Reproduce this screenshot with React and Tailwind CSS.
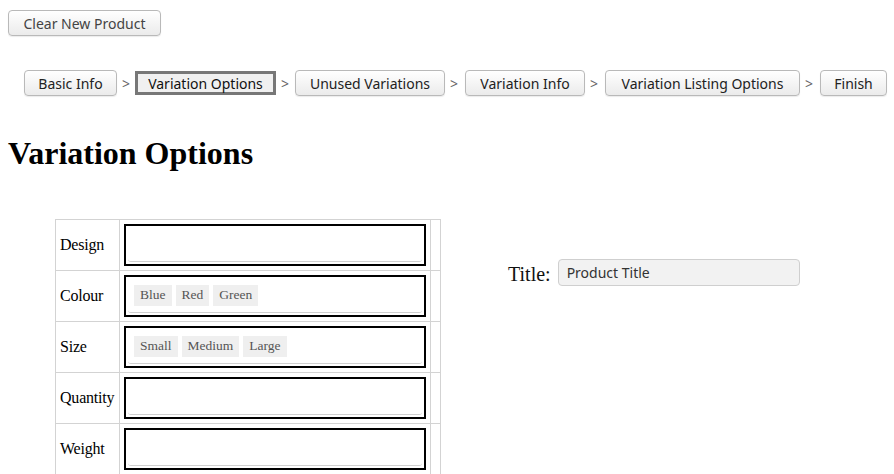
import React from "react";

// ============================================
// DATA
// ============================================
const STEPS = [
  { label: "Basic Info", w: "w-[93px]" },
  { label: "Variation Options", w: "w-[141px]", active: true },
  { label: "Unused Variations", w: "w-[150px]" },
  { label: "Variation Info", w: "w-[120px]" },
  { label: "Variation Listing Options", w: "w-[195px]" },
  { label: "Finish", w: "w-[67px]" },
];

const ROWS = [
  { name: "Design", tags: [] },
  { name: "Colour", tags: ["Blue", "Red", "Green"] },
  { name: "Size", tags: ["Small", "Medium", "Large"] },
  { name: "Quantity", tags: [] },
  { name: "Weight", tags: [] },
];

const uiFont = "font-['Noto_Sans',sans-serif]";
const serifFont = "font-['Liberation_Serif',serif]";

const btnBase = `h-[26px] rounded-[4px] border border-[#b9b9b9] bg-gradient-to-b from-white to-[#ebebeb] text-[14px] text-[#222] ${uiFont} flex items-center justify-center shadow-[0_1px_1px_rgba(0,0,0,0.08)]`;

const TagInput = ({ tags }) => (
  <div className="h-[42px] border-2 border-black bg-white p-[2px]">
    <div className="h-[34px] rounded-[3px] border-b border-[#d0d0d0] flex items-center gap-[4px] pl-[6px]">
      {tags.map((t) => (
        <span
          key={t}
          className={`bg-[#efefef] px-[6px] h-[21px] flex items-center text-[13.5px] text-[#555] ${serifFont}`}
        >
          {t}
        </span>
      ))}
    </div>
  </div>
);

export default function App() {
  return (
    <div className="w-[894px] h-[474px] overflow-hidden bg-white">
      {/* Clear button */}
      <div className="pt-[10px] pl-[8px]">
        <button className={`${btnBase} w-[153px] text-[#444]`}>
          Clear New Product
        </button>
      </div>

      {/* Step navigation */}
      <div className="flex items-center pl-[24px] mt-[34px]">
        {STEPS.map((s, i) => (
          <React.Fragment key={s.label}>
            {i > 0 && (
              <span className={`text-[#666] text-[14px] ${uiFont} w-[18px] text-center`}>
                &gt;
              </span>
            )}
            {s.active ? (
              <button
                className={`h-[24px] border-[3px] border-[#777] bg-[#f0f0f0] text-[14px] text-[#111] ${uiFont} flex items-center justify-center ${s.w}`}
              >
                {s.label}
              </button>
            ) : (
              <button className={`${btnBase} ${s.w} ${i === 2 ? "ml-[1px]" : ""} ${i > 2 ? "ml-[2px]" : ""}`}>
                {s.label}
              </button>
            )}
          </React.Fragment>
        ))}
      </div>

      {/* Heading */}
      <h1 className={`${serifFont} font-bold text-[32px] leading-[37px] text-black pl-[8px] mt-[39px]`}>
        Variation Options
      </h1>

      {/* Body */}
      <div className="flex mt-[47px] pl-[55px]">
        <table className={`table-fixed w-[385px] border-collapse border border-[#d3d3d3] ${serifFont} text-[16px]`}>
          <colgroup>
            <col className="w-[64px]" />
            <col className="w-[311px]" />
            <col className="w-[10px]" />
          </colgroup>
          <tbody>
            {ROWS.map((r) => (
              <tr key={r.name} className="h-[51px]">
                <td className="border border-[#d3d3d3] pl-[4px] text-black whitespace-nowrap tracking-[-0.2px]">
                  {r.name}
                </td>
                <td className="border border-[#d3d3d3] pl-[4px] pr-[4px]">
                  <TagInput tags={r.tags} />
                </td>
                <td className="border border-[#d3d3d3]"></td>
              </tr>
            ))}
          </tbody>
        </table>

        <div className="ml-[67px] mt-[40px] flex items-start gap-[7px]">
          <span className={`${serifFont} text-[20px] text-[#111]`}>Title:</span>
          <div
            className={`w-[242px] h-[27px] rounded-[4px] border border-[#cfcfcf] bg-[#f2f2f2] flex items-center pl-[8px] text-[14px] text-[#333] ${uiFont}`}
          >
            Product Title
          </div>
        </div>
      </div>
    </div>
  );
}
